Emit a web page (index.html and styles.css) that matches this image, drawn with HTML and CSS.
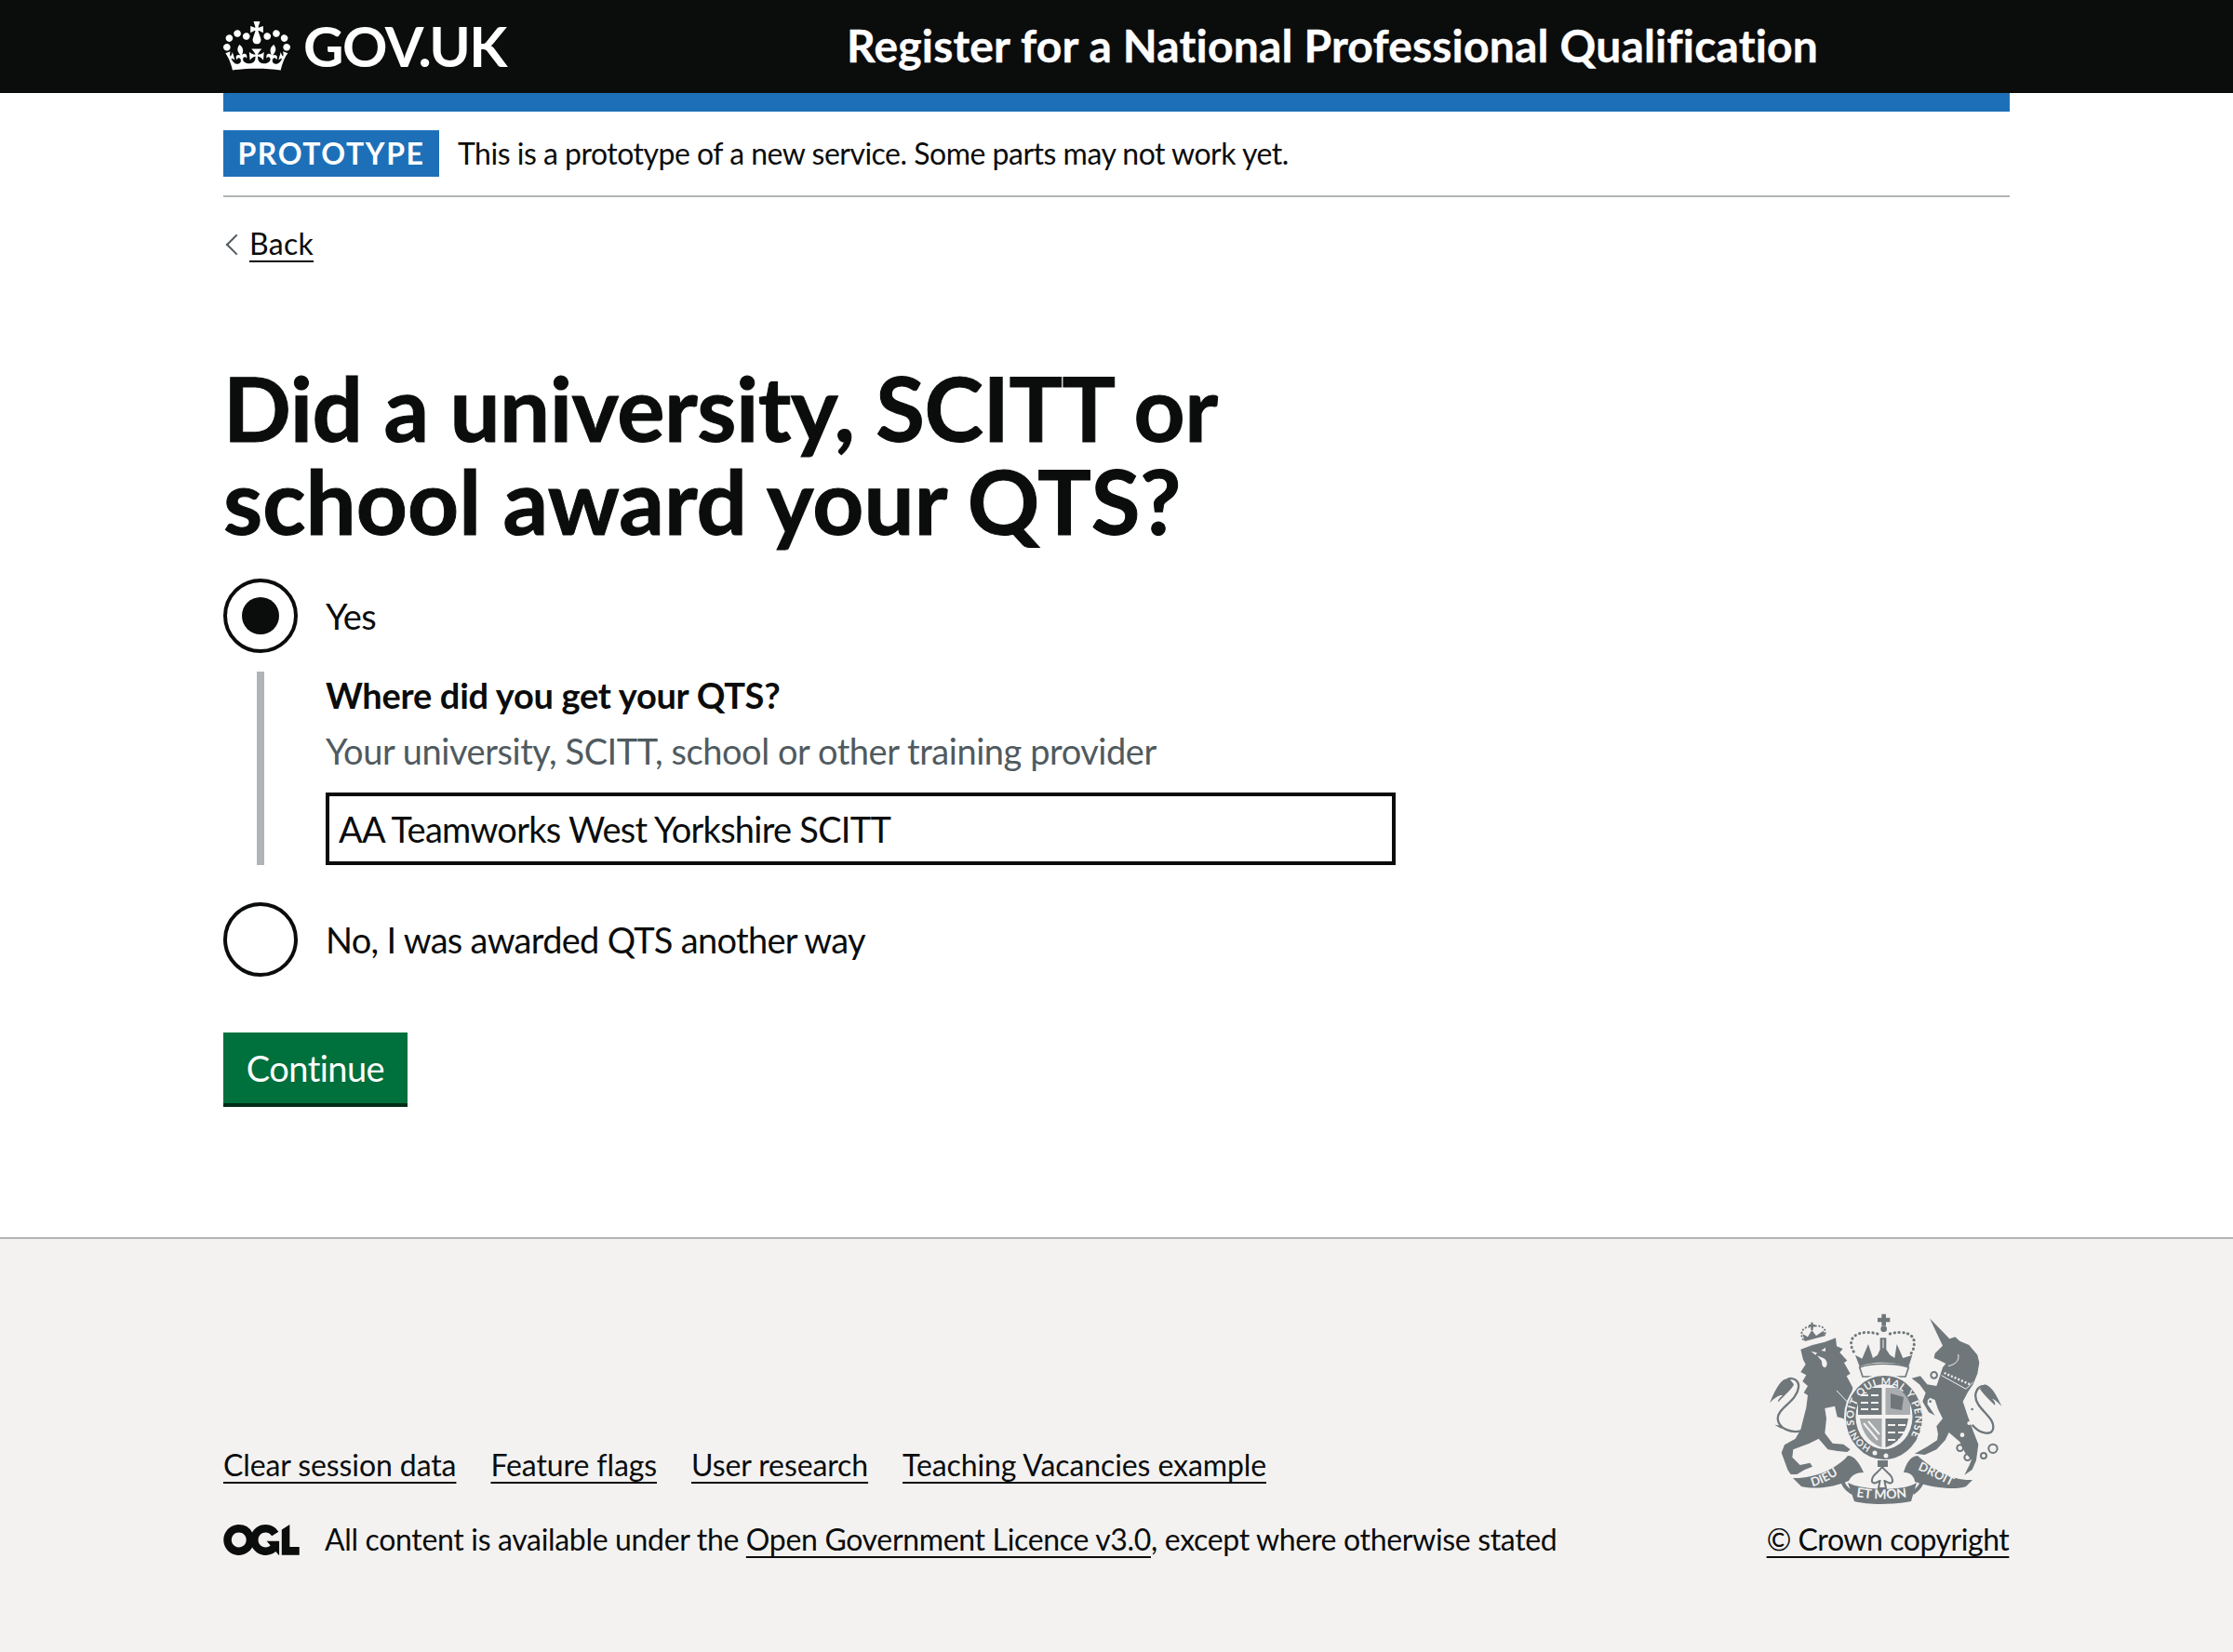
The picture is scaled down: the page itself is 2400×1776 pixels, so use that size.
FILE: index.html
```html
<!DOCTYPE html>
<html lang="en">
	<head>
		<meta charset="UTF-8">
		<meta name="viewport" content="width=device-width, initial-scale=1">
		<title>Did a university, SCITT or school award your QTS?</title>
		<link rel="stylesheet" href="styles.css">
	</head>
	<body>

		<header class="header">
			<div class="container header-inner">
				<a class="logo" href="#">
					<svg class="crown" viewBox="0 0 132 97" aria-hidden="true"><path fill="currentColor" fill-rule="evenodd" d="M25 30.2c3.5 1.5 7.7-.2 9.1-3.7 1.5-3.6-.2-7.8-3.9-9.2-3.6-1.4-7.6.3-9.1 3.9-1.4 3.5.3 7.5 3.9 9zM9 39.5c3.6 1.5 7.8-.2 9.2-3.7 1.5-3.6-.2-7.8-3.9-9.1-3.6-1.5-7.6.2-9.1 3.8-1.4 3.5.3 7.5 3.8 9zM4.4 57.2c3.5 1.5 7.7-.2 9.1-3.8 1.5-3.6-.2-7.7-3.9-9.1-3.5-1.5-7.6.3-9.1 3.8-1.4 3.5.3 7.6 3.9 9.1zm38.3-21.4c3.5 1.5 7.7-.2 9.1-3.8 1.5-3.6-.2-7.7-3.9-9.1-3.6-1.5-7.6.3-9.1 3.8-1.3 3.6.4 7.7 3.9 9.1zm64.4-5.6c-3.6 1.5-7.8-.2-9.1-3.7-1.5-3.6.2-7.8 3.8-9.2 3.6-1.4 7.7.3 9.2 3.9 1.3 3.5-.4 7.5-3.9 9zm15.9 9.3c-3.6 1.5-7.7-.2-9.1-3.7-1.5-3.6.2-7.8 3.7-9.1 3.6-1.5 7.7.2 9.2 3.8 1.5 3.5-.3 7.5-3.8 9zm4.7 17.7c-3.6 1.5-7.8-.2-9.2-3.8-1.5-3.6.2-7.7 3.9-9.1 3.6-1.5 7.7.3 9.2 3.8 1.3 3.5-.4 7.6-3.9 9.1zM89.3 35.8c-3.6 1.5-7.8-.2-9.2-3.8-1.4-3.6.2-7.7 3.9-9.1 3.6-1.5 7.7.3 9.2 3.8 1.4 3.6-.3 7.7-3.9 9.1zM69.7 17.7l8.9 4.7V9.3l-8.9 2.8c-.2-.3-.5-.6-.9-.9L72.4 0H59.6l3.6 11.2c-.3.3-.6.5-.9.9l-8.8-2.8v13.1l8.8-4.7c.3.3.6.7.9.9l-5 15.4v.1c-.2.8-.4 1.6-.4 2.4 0 4.1 3.1 7.5 7 8.1h.2c.3 0 .7.1 1 .1.4 0 .7 0 1-.1h.2c4-.6 7.1-4.1 7.1-8.1 0-.8-.1-1.7-.4-2.4V34l-5.1-15.4c.4-.2.7-.6 1-.9zM66 92.8c16.9 0 32.8 1.1 47.1 3.2 4-16.9 8.9-26.7 14-33.5l-9.6-3.4c1 4.9 1.1 7.2 0 10.2-1.5-1.4-3-4.3-4.2-8.7L108.6 76c2.8-2 5-3.2 7.5-3.3-4.4 9.4-10 11.9-13.6 11.2-4.3-.8-6.3-4.6-5.6-7.9 1-4.7 5.7-5.9 8-.5 4.3-8.7-3-11.4-7.6-8.8 7.1-7.2 7.9-13.5 2.1-21.1-8 6.1-8.1 12.3-4.5 20.8-4.7-5.4-12.1-2.5-9.5 6.2 3.4-5.2 7.9-2 7.2 3.1-.6 4.3-6.4 7.8-13.5 7.2-10.3-.9-10.9-8-11.2-13.8 2.5-.5 7.1 1.8 11 7.3L80.2 60c-4.1 4.4-8 5.3-12.3 5.4 1.4-4.4 8-11.6 8-11.6H55.5s6.4 7.2 7.9 11.6c-4.2-.1-8-1-12.3-5.4l1.4 16.4c3.9-5.5 8.5-7.7 10.9-7.3-.3 5.8-.9 12.8-11.1 13.8-7.2.6-12.9-2.9-13.5-7.2-.7-5 3.8-8.3 7.1-3.1 2.7-8.7-4.6-11.6-9.4-6.2 3.7-8.5 3.6-14.7-4.6-20.8-5.8 7.6-5 13.9 2.2 21.1-4.7-2.6-11.9.1-7.7 8.8 2.3-5.5 7.1-4.2 8.1.5.7 3.3-1.3 7.1-5.7 7.9-3.5.7-9-1.8-13.5-11.2 2.5.1 4.7 1.3 7.5 3.3l-4.7-15.4c-1.2 4.4-2.7 7.2-4.3 8.7-1.1-3-.9-5.3 0-10.2l-9.5 3.4c5 6.9 9.9 16.7 14 33.5 14.8-2.1 30.8-3.2 47.7-3.2z"/></svg>
					<span class="logo-text">GOV.UK</span>
				</a>
				<a class="service-name" href="#">Register for a National Professional Qualification</a>
			</div>
		</header>

		<div class="container">
			<div class="blue-bar"></div>

			<div class="phase-banner">
				<strong class="tag">Prototype</strong>
				<span class="phase-text">This is a prototype of a new service. Some parts may not work yet.</span>
			</div>

			<a class="back-link" href="#">Back</a>

			<main class="main">
				<form action="#">
					<h1 class="heading"><span class="heading-first">Did a university, SCITT or</span><br>school award your QTS?</h1>

					<div class="radio-row">
						<input class="radio" type="radio" id="qts-yes" name="qts" checked>
						<label class="radio-label" for="qts-yes">Yes</label>
					</div>

					<div class="conditional">
						<label class="field-label" for="provider">Where did you get your QTS?</label>
						<div class="hint">Your university, SCITT, school or other training provider</div>
						<input class="input" id="provider" name="provider" value="AA Teamworks West Yorkshire SCITT">
					</div>

					<div class="radio-row">
						<input class="radio" type="radio" id="qts-no" name="qts">
						<label class="radio-label" for="qts-no">No, I was awarded QTS another way</label>
					</div>

					<button class="button" type="submit">Continue</button>
				</form>
			</main>
		</div>

		<footer class="footer">
			<div class="container footer-inner">
				<div class="footer-left">
					<ul class="footer-links">
						<li><a href="#">Clear session data</a></li>
						<li><a href="#">Feature flags</a></li>
						<li><a href="#">User research</a></li>
						<li><a href="#">Teaching Vacancies example</a></li>
					</ul>
					<div class="licence">
						<svg class="ogl" viewBox="0 0 483.2 195.7" aria-hidden="true"><path fill="currentColor" d="M421.5 142.8V.1l-50.7 32.3v161.1h112.4v-50.7zm-122.3-9.6A47.12 47.12 0 0 1 221 97.8c0-26 21.1-47.1 47.1-47.1 16.7 0 31.4 8.7 39.7 21.8l42.7-27.2A97.63 97.63 0 0 0 268.1 0c-36.5 0-68.3 20.1-85.1 49.7A98 98 0 0 0 97.8 0C43.9 0 0 43.9 0 97.8s43.9 97.8 97.8 97.8c36.5 0 68.3-20.1 85.1-49.7a97.76 97.76 0 0 0 149.6 25.4l19.4 22.2h3v-87.8h-80l24.3 27.5zM97.8 145c-26 0-47.1-21.1-47.1-47.1s21.1-47.1 47.1-47.1 47.2 21 47.2 47S123.8 145 97.8 145"/></svg>
						<span>All content is available under the <a href="#">Open Government Licence v3.0</a>, except where otherwise stated</span>
					</div>
				</div>
				<div class="footer-right">
					<svg class="crest" viewBox="0 0 256 210" aria-hidden="true">
						<defs>
							<path id="garter-top" d="M95 122 A33 36 0 1 1 147 144"/>
							<path id="garter-low" d="M113 145 A33 36 0 0 1 95 125"/>
							<path id="ribbon-left" d="M50 188 C62 185 76 177 88 168"/>
							<path id="ribbon-mid" d="M97 199 C115 202 135 202 155 199"/>
							<path id="ribbon-right" d="M163 170 C175 175 190 183 204 190"/>
						</defs>

						<!-- lion -->
						<g transform="scale(.3333)">
							<path class="crest-fill" d="M112 122 L150 108 L190 98 L225 85 L228 112 L248 120 L238 132 L262 158 L252 165 L272 200 L260 208 L280 245 L272 285 L285 330 L290 368 L268 372 L250 345 L230 340 L222 305 L190 312 L195 345 L190 392 L215 425 L250 428 L272 445 L262 453 L232 450 L200 445 L170 410 L140 425 L88 445 L85 470 L110 495 L142 488 L150 500 L125 510 L100 525 L80 525 L70 510 L50 455 L60 430 L95 410 L112 380 L130 310 L135 270 L122 262 L135 240 L118 225 L130 205 L112 195 L128 170 L120 155 Z"/>
							<path class="crest-line" stroke-width="7" d="M112 385 C85 392 40 380 38 345 C38 310 100 290 105 245 C108 220 85 212 70 218"/>
							<path class="crest-fill" d="M75 215 C50 215 35 240 12 295 C30 275 45 268 55 270 C40 280 38 290 40 292 C60 270 85 250 90 235 Z"/>
							<path class="crest-fill" d="M28 365 L52 368 L50 378 Z"/>
							<path class="crest-fill" d="M125 96 L118 72 L135 82 L148 60 L162 78 L185 62 L192 78 Z"/>
							<path class="crest-line" stroke-width="6" stroke-linecap="round" stroke-dasharray="1 10" d="M120 90 C105 65 125 45 148 50 C170 40 197 50 190 74"/>
							<path class="crest-fill" d="M145 35 H152 V42 H159 V49 H152 V60 H145 V49 H138 V42 H145 Z"/>
							<path class="crest-bg" d="M145 128 L165 133 L160 140 Z M178 126 L192 116 L192 128 Z M165 142 L185 150 C196 155 202 170 192 180 C182 182 180 170 180 160 Z"/>
							<path class="crest-cut" stroke-width="3" d="M228 255 L282 312"/>
						</g>

						<!-- unicorn -->
						<g transform="translate(140 0) scale(.3333)">
							<path class="crest-fill" d="M108 22 L172 88 L190 82 L205 95 L235 108 L262 140 L268 165 L262 200 L248 235 L232 258 L215 290 L230 335 L248 385 L265 428 L258 480 L245 510 L220 527 L236 495 L243 478 L222 455 L205 420 L170 390 L158 415 L130 445 L92 462 L60 458 L100 436 L132 415 L135 395 L130 370 L150 345 L135 315 L125 285 L108 278 L100 298 L125 335 L105 325 L85 290 L95 262 L75 235 L50 215 L78 208 L100 235 L130 240 L142 205 L150 180 L160 168 L135 155 L122 150 L125 135 L150 110 Z"/>
							<path class="crest-line" stroke-width="7" d="M285 240 C255 240 248 275 265 300 C285 330 320 350 312 380 C305 400 270 395 245 365"/>
							<path class="crest-fill" d="M285 235 C310 240 325 275 340 305 C325 290 315 282 310 282 C320 292 320 300 318 302 C300 285 280 265 270 250 Z"/>
							<path class="crest-cut" stroke-width="3" d="M200 138 C205 160 190 170 168 176 M146 206 L225 250 L248 228"/>
							<path class="crest-cut" stroke-width="7" stroke-dasharray="6 6" d="M155 198 L240 236"/>
							<circle class="crest-line" stroke-width="6" cx="122" cy="205" r="10"/>
							<circle class="crest-line" stroke-width="6" cx="206" cy="440" r="10"/>
							<circle class="crest-line" stroke-width="6" cx="230" cy="470" r="10"/>
							<circle class="crest-line" stroke-width="6" cx="282" cy="465" r="9"/>
							<circle class="crest-line" stroke-width="6" cx="312" cy="442" r="14"/>
							<circle class="crest-bg" cx="245" cy="315" r="10"/>
							<circle class="crest-bg" cx="235" cy="360" r="6"/>
							<circle class="crest-bg" cx="213" cy="398" r="7"/>
							<circle class="crest-bg" cx="110" cy="290" r="9"/>
							<circle class="crest-fill" cx="245" cy="315" r="4"/>
							<circle class="crest-fill" cx="110" cy="290" r="4"/>
						</g>

						<!-- crown -->
						<g transform="translate(70 0) scale(.3333)">
							<path class="crest-fill" d="M78 140 L100 152 L120 105 L135 150 L150 140 L158 122 V85 H178 V122 L190 140 L205 150 L212 105 L232 150 L262 140 L250 178 C200 160 130 160 92 178 Z"/>
							<path class="crest-fill" d="M163 8 H177 V20 H190 V34 H177 V46 H163 V34 H150 V20 H163 Z"/>
							<circle class="crest-fill" cx="170" cy="56" r="10"/>
							<path class="crest-cut" stroke-width="3" d="M168 90 V118"/>
							<path class="crest-line" stroke-width="9" stroke-linecap="round" stroke-dasharray="1 13.5" d="M150 72 C110 60 62 70 65 105 C65 118 72 130 80 138"/>
							<path class="crest-line" stroke-width="9" stroke-linecap="round" stroke-dasharray="1 13.5" d="M190 72 C230 60 272 70 268 105 C268 118 262 130 256 138"/>
							<path class="crest-bg" stroke="#6f777b" stroke-width="5" d="M92 180 C130 165 210 165 250 180 L240 210 L102 210 Z"/>
						</g>

						<!-- garter and shield -->
						<ellipse class="crest-fill garter" cx="127" cy="114" rx="42" ry="46"/>
						<ellipse class="crest-bg" cx="127" cy="113" rx="30.5" ry="35"/>
						<path class="crest-fill" d="M99 82 H124.5 V111 H99 Z"/>
						<path class="crest-fill" d="M128.5 82 H155 V111 H128.5 Z" opacity=".55"/>
						<path class="crest-fill" d="M101 115 H124.5 V146 C112 142 103 130 101 115 Z" opacity=".6"/>
						<path class="crest-fill" d="M128.5 115 H153 C151 130 142 142 128.5 146 Z"/>
						<path class="crest-cut" stroke-width="2" stroke-dasharray="8 3" d="M102 90 H122 M102 98 H122 M102 105 H122 M131 122 H151 M131 130 H149 M131 138 H143"/>
						<path class="crest-fill" d="M134 88 L148 92 L146 106 L134 104 Z"/>
						<path class="crest-cut" stroke-width="2" d="M105 120 L120 138 M110 118 L122 132"/>
						<circle class="crest-bg" cx="117" cy="152" r="2.5"/>
						<circle class="crest-bg" cx="129" cy="155" r="2.5"/>

						<!-- motto ribbons -->
						<path class="crest-fill" d="M29 179 C50 180 75 170 88 155 C95 155 100 162 105 173 C97 173 92 176 89 182 C75 188 55 192 38 188 Z"/>
						<path class="crest-line" stroke-width="4" d="M86 174 C78 182 85 190 93 195"/>
						<path class="crest-fill" d="M88 184 C105 193 150 193 162 184 L156 204 C135 208 110 208 95 204 Z"/>
						<path class="crest-fill" d="M222 181 C200 182 180 170 163 155 C155 155 150 165 148 173 C155 172 160 178 160 183 C180 190 205 192 215 188 Z"/>
						<path class="crest-line" stroke-width="4" d="M165 174 C172 182 165 190 158 195"/>
						<path class="crest-bg" stroke="#6f777b" stroke-width="2" d="M125 167 C130 174 137 176 136 183 C133 187 129 182 127.5 182 L129 190 H121 L122.5 182 C121 182 117 187 114 183 C113 176 120 174 125 167 Z"/>
						<path class="crest-fill" d="M120 160 H131 V167 H120 Z"/>

						<g class="crest-text">
							<text font-size="11"><textPath href="#garter-top" textLength="134">SOIT QUI MAL Y PENSE</textPath></text>
							<text font-size="10"><textPath href="#garter-low">HONI</textPath></text>
							<text font-size="13"><textPath href="#ribbon-left">DIEU</textPath></text>
							<text font-size="14"><textPath href="#ribbon-mid">ET MON</textPath></text>
							<text font-size="13"><textPath href="#ribbon-right">DROIT</textPath></text>
						</g>
					</svg>
					<a class="copyright" href="#">© Crown copyright</a>
				</div>
			</div>
		</footer>

	</body>
</html>
```

FILE: styles.css
```css
* {
	box-sizing: border-box;
}
body {
	margin: 0;
	background: #fff;
	color: #0b0c0c;
	font-family: Lato, "Noto Sans", sans-serif;
	font-size: 38px;
	line-height: 50px;
}
a {
	color: inherit;
}
.container {
	width: 1920px;
	margin-inline: auto;
}

/* header */
.header {
	background: #0b0c0c;
	color: #fff;
	height: 100px;
}
.header-inner {
	display: flex;
	align-items: center;
	height: 100%;
}
.header a {
	text-decoration: none;
	color: #fff;
}
.logo {
	display: flex;
	align-items: center;
	gap: 14px;
	width: 670px;
	padding-bottom: 2px;
}
.crown {
	width: 72px;
	height: 53px;
}
.logo-text {
	font-size: 60px;
	font-weight: 700;
	line-height: 60px;
	letter-spacing: -1.5px;
}
.service-name {
	font-size: 48px;
	font-weight: 700;
	letter-spacing: .18px;
	white-space: nowrap;
	padding-bottom: 2px;
	-webkit-text-stroke: .4px #fff;
}
.blue-bar {
	height: 20px;
	background: #1d70b8;
}

/* phase banner */
.phase-banner {
	display: flex;
	align-items: center;
	gap: 20px;
	padding-block: 20px;
	border-bottom: 2px solid #b1b4b6;
	font-size: 32px;
	line-height: 50px;
}
.tag {
	background: #1d70b8;
	color: #fff;
	width: 232px;
	height: 50px;
	text-align: center;
	text-transform: uppercase;
	letter-spacing: 1.6px;
	font-weight: 700;
	font-size: 32px;
}
.phase-text {
	letter-spacing: -.5px;
}

.back-link {
	display: inline-block;
	position: relative;
	margin-top: 30px;
	padding-left: 28px;
	font-size: 32px;
	line-height: 40px;
	letter-spacing: .3px;
	text-underline-offset: 6px;
	text-decoration-thickness: 2px;
	text-decoration-skip-ink: none;
}
.back-link::before {
	content: "";
	position: absolute;
	left: 6px;
	top: 13px;
	width: 14px;
	height: 14px;
	border-left: 2px solid #505a5f;
	border-bottom: 2px solid #505a5f;
	transform: rotate(45deg);
}

/* form */
.main {
	padding-top: 104px;
	padding-bottom: 140px;
}
.heading {
	margin: 0 0 34px;
	font-size: 96px;
	line-height: 100px;
	font-weight: 700;
	letter-spacing: .05px;
	-webkit-text-stroke: 1px #0b0c0c;
}
.heading-first {
	letter-spacing: -.5px;
}
.radio-row {
	display: flex;
	align-items: center;
	gap: 30px;
}
.radio {
	appearance: none;
	width: 80px;
	height: 80px;
	margin: 0;
	padding: 16px;
	border: 4px solid #0b0c0c;
	border-radius: 50%;
	background: #fff;
	flex: none;
}
.radio:checked {
	background: #0b0c0c content-box;
}
.radio-label {
	letter-spacing: -.7px;
}
.conditional {
	margin: 20px 0 40px 36px;
	padding-left: 66px;
	border-left: 8px solid #b1b4b6;
}
.field-label {
	display: block;
	font-weight: 700;
	letter-spacing: -.28px;
	margin-bottom: 10px;
}
.hint {
	color: #505a5f;
	letter-spacing: -.45px;
	margin-bottom: 20px;
}
.input {
	display: block;
	width: 1150px;
	height: 78px;
	border: 4px solid #0b0c0c;
	border-radius: 0;
	padding: 10px;
	font: inherit;
	color: inherit;
	letter-spacing: -.74px;
}
.button {
	display: block;
	margin-top: 60px;
	width: 198px;
	height: 80px;
	padding: 0 0 4px;
	border: 0;
	border-radius: 0;
	background: #00703c;
	box-shadow: inset 0 -4px 0 #002d18;
	color: #fff;
	font: inherit;
	letter-spacing: -.55px;
}

/* footer */
.footer {
	background: #f3f2f1;
	border-top: 2px solid #b1b4b6;
	height: 446px;
	padding-top: 78px;
	font-size: 32px;
	line-height: 40px;
}
.footer a {
	text-underline-offset: 6px;
	text-decoration-thickness: 2px;
	text-decoration-skip-ink: none;
}
.footer-inner {
	display: flex;
	justify-content: space-between;
	align-items: flex-end;
}
.footer-links {
	display: flex;
	gap: 37px;
	list-style: none;
	margin: 0 0 40px;
	padding: 0;
	letter-spacing: -.1px;
}
.licence {
	display: flex;
	align-items: center;
	gap: 27px;
	letter-spacing: -.33px;
}
.ogl {
	width: 82px;
	height: 33px;
	flex: none;
}
.footer-right {
	display: flex;
	flex-direction: column;
	align-items: center;
	gap: 15px;
}
.crest {
	width: 256px;
	height: 210px;
	flex: none;
	margin-right: 6px;
}
.crest-fill {
	fill: #6f777b;
}
.crest-bg {
	fill: #f3f2f1;
}
.crest-line {
	fill: none;
	stroke: #6f777b;
}
.crest-cut {
	fill: none;
	stroke: #f3f2f1;
}
.garter {
	stroke: #f3f2f1;
	stroke-width: 2;
}
.crest-text {
	fill: #f3f2f1;
	font-weight: 700;
}
.copyright {
	white-space: nowrap;
	letter-spacing: -.45px;
}
```
